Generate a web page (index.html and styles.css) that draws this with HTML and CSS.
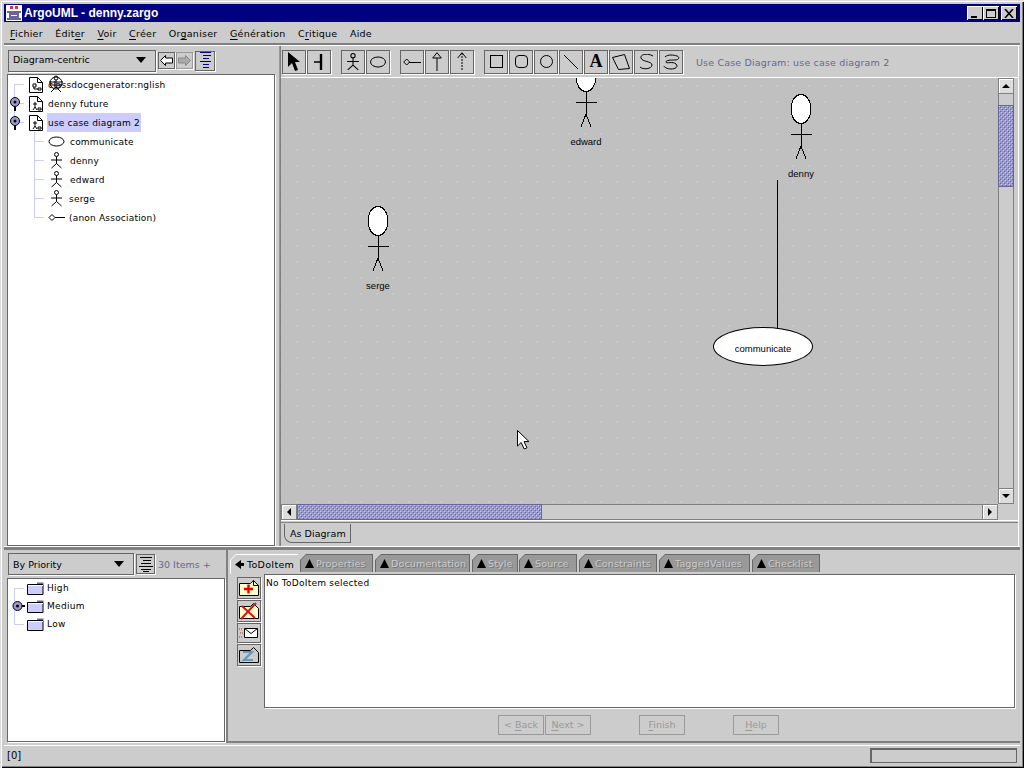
FILE: index.html
```html
<!DOCTYPE html>
<html>
<head>
<meta charset="utf-8">
<title>ArgoUML - denny.zargo</title>
<link rel="stylesheet" href="styles.css">
</head>
<body>
<svg class="defs" width="0" height="0">
  <defs>
    <symbol id="doc" viewBox="0 0 14 16">
      <path d="M.5.5h8l5 5v10H.5z M8.5.5v5h5" fill="#fff" stroke="#000"/>
    </symbol>
    <symbol id="actor" viewBox="0 0 17 17">
      <circle cx="8.5" cy="2.5" r="2" fill="none" stroke="#000"/>
      <path d="M8.5 4.5v7M3 8h11M8.5 11.5L3.5 16M8.5 11.5l5 4.5" fill="none" stroke="#000"/>
    </symbol>
    <symbol id="figure" viewBox="0 0 24 66">
      <ellipse cx="12" cy="15" rx="10" ry="14.500" fill="#fff" stroke="#000"/>
      <path d="M12 29.500v23M1.500 40.500h21M12 52l-5 13M12 52l5 13" fill="none" stroke="#000"/>
    </symbol>
    <symbol id="key" viewBox="0 0 12 16">
      <circle cx="6" cy="6" r="4.500" fill="#99c" stroke="#000"/>
      <circle cx="6" cy="6" r="1.500" fill="#000"/>
      <path d="M6 10.500V15" stroke="#000" stroke-width="2"/>
    </symbol>
    <symbol id="folder" viewBox="0 0 17 13">
      <path d="M10 .5h6.500v2H10z" fill="#669"/>
      <path d="M.5 2.500h15.500v10H.5z" fill="#ccf" stroke="#000"/>
      <path d="M1 3.500h15" stroke="#fff"/>
    </symbol>
    <symbol id="note" viewBox="0 0 20 16">
      <path d="M.5 3.500h11l3-3 5 5v10H.5z" fill="#ffc" stroke="#000"/>
      <path d="M14.500.5v5h5" fill="none" stroke="#000"/>
    </symbol>
    <symbol id="tri-up" viewBox="0 0 9 9"><path d="M4.500 0L9 9H0z"/></symbol>
  </defs>
</svg>

<div class="window">
  <div class="titlebar">
    <svg class="app-icon" width="16" height="16" viewBox="0 0 16 16">
      <rect width="16" height="16" fill="#fff"/>
      <path d="M4 1h3v3H4zM9 1h3v3H9z" fill="#d33"/>
      <path d="M1 6h14v2H1zM3 8h10v5H3zM1 13h14v2H1z" fill="#669"/>
      <path d="M5 10h6v1H5z" fill="#fff"/>
    </svg>
    <span class="title-text">ArgoUML - denny.zargo</span>
    <div class="win-btns">
      <span class="win-btn"><i class="glyph-min"></i></span>
      <span class="win-btn"><i class="glyph-max"></i></span>
      <span class="win-btn close">
        <svg width="10" height="9" viewBox="0 0 10 9"><path d="M1 0l8 9M9 0l-8 9" stroke="#000" stroke-width="1.600"/></svg>
      </span>
    </div>
  </div>

  <div class="menubar">
    <span><u>F</u>ichier</span>
    <span>Édit<u>e</u>r</span>
    <span><u>V</u>oir</span>
    <span><u>C</u>réer</span>
    <span>Or<u>g</u>aniser</span>
    <span><u>G</u>énération</span>
    <span>C<u>r</u>itique</span>
    <span>Aide</span>
  </div>

  <div class="upper">
    <div class="nav-pane">
      <div class="nav-tools">
        <div class="combo wide">Diagram-centric<i class="combo-arrow"></i></div>
        <span class="mini-btn">
          <svg width="13" height="11" viewBox="0 0 13 11"><path d="M5.500.5L.5 5.500l5 5V8h7V3h-7z" fill="#fff" stroke="#000"/></svg>
        </span>
        <span class="mini-btn off">
          <svg width="13" height="11" viewBox="0 0 13 11"><path d="M7.500.5l5 5-5 5V8h-7V3h7z" fill="#aaa" stroke="#888"/></svg>
        </span>
        <span class="mini-btn outline-btn">
          <svg width="13" height="17" viewBox="0 0 13 17"><path d="M1 .5h11M4 3.500h8M4 6.500h6M1 9.500h11M4 12.500h6M4 15.500h6" stroke="#008"/></svg>
        </span>
      </div>
      <div class="tree nav-tree">
        <div class="tree-row top-first">
          <svg class="doc-icon"><use href="#doc"/></svg>
          <svg class="mini" width="10" height="8" viewBox="0 0 10 8"><path d="M1 1h3v3H1zM6 5h3v2H6zM2 4v2h4" fill="none" stroke="#000"/></svg>
          <span class="label">classdocgenerator:nglish</span>
          <svg class="overlay-actor" width="18" height="18" viewBox="0 0 18 18">
            <circle cx="9" cy="3" r="2" fill="none" stroke="#000"/>
            <path d="M9 5v8M2 7h14M3 10h12M9 12l-5 5M9 12l5 5" fill="none" stroke="#000"/>
            <circle cx="9" cy="8" r="6" fill="none" stroke="#000"/>
          </svg>
        </div>
        <div class="tree-row top-mid">
          <svg class="handle"><use href="#key"/></svg>
          <svg class="doc-icon"><use href="#doc"/></svg>
          <svg class="mini" width="10" height="10" viewBox="0 0 10 10"><path d="M3 1v5M1 3h4M3 6L1 9M3 6l2 3M6 7h3v2H6z" fill="none" stroke="#000"/></svg>
          <span class="label">denny future</span>
        </div>
        <div class="tree-row top-last">
          <svg class="handle"><use href="#key"/></svg>
          <svg class="doc-icon"><use href="#doc"/></svg>
          <svg class="mini" width="10" height="10" viewBox="0 0 10 10"><path d="M3 1v5M1 3h4M3 6L1 9M3 6l2 3M6 7h3v2H6z" fill="none" stroke="#000"/></svg>
          <span class="label picked">use case diagram 2</span>
        </div>
        <div class="tree-row child">
          <svg class="leaf" viewBox="0 0 17 17"><ellipse cx="8.500" cy="8.500" rx="7.500" ry="4.500" fill="#fff" stroke="#000"/></svg>
          <span class="label">communicate</span>
        </div>
        <div class="tree-row child">
          <svg class="leaf"><use href="#actor"/></svg>
          <span class="label">denny</span>
        </div>
        <div class="tree-row child">
          <svg class="leaf"><use href="#actor"/></svg>
          <span class="label">edward</span>
        </div>
        <div class="tree-row child tight">
          <svg class="leaf"><use href="#actor"/></svg>
          <span class="label">serge</span>
        </div>
        <div class="tree-row child tight last">
          <svg class="leaf" viewBox="0 0 17 17"><path d="M1 8.500l3-3 3 3-3 3z" fill="#fff" stroke="#000"/><path d="M7 8.500h10" stroke="#000"/></svg>
          <span class="label">(anon Association)</span>
        </div>
      </div>
    </div>

    <div class="editor-pane">
      <div class="draw-tools">
        <div class="tool-group">
          <span class="tool"><svg width="14" height="20" viewBox="0 0 14 20"><path d="M1 0v15l4-4 3 8 3-1-3-8h5z"/></svg></span>
          <span class="tool"><svg width="12" height="16" viewBox="0 0 12 16"><path d="M8 0v16" stroke="#000" stroke-width="2.400"/><path d="M1 8h7" stroke="#000" stroke-width="1.500"/></svg></span>
        </div>
        <div class="tool-group">
          <span class="tool"><svg width="18" height="18" viewBox="0 0 18 18"><use href="#actor" width="18" height="18"/></svg></span>
          <span class="tool"><svg width="18" height="12" viewBox="0 0 18 12"><ellipse cx="9" cy="6" rx="7.500" ry="5" fill="none" stroke="#000"/></svg></span>
        </div>
        <div class="tool-group">
          <span class="tool"><svg width="18" height="8" viewBox="0 0 18 8"><path d="M.7 4l3-3 3 3-3 3z" fill="none" stroke="#000"/><path d="M6 4.500h12" stroke="#000"/></svg></span>
          <span class="tool"><svg width="10" height="19" viewBox="0 0 10 19"><path d="M5 .7L.7 6h8.600zM5 6v13" fill="none" stroke="#000"/></svg></span>
          <span class="tool"><svg width="10" height="19" viewBox="0 0 10 19"><path d="M5 .7L.7 6M5 .7L9.300 6" fill="none" stroke="#000"/><path d="M5 1v18" stroke="#000" stroke-dasharray="2 1"/></svg></span>
        </div>
        <div class="tool-group">
          <span class="tool"><i class="shape-rect"></i></span>
          <span class="tool"><i class="shape-rect round"></i></span>
          <span class="tool"><i class="shape-rect circle"></i></span>
          <span class="tool"><svg width="14" height="14" viewBox="0 0 14 14"><path d="M0 0l14 14" stroke="#000"/></svg></span>
          <span class="tool letter">A</span>
          <span class="tool"><svg width="18" height="16" viewBox="0 0 18 16"><path d="M.5 3.500l12-3 5 14-11 1z" fill="none" stroke="#000"/></svg></span>
          <span class="tool"><svg width="15" height="16" viewBox="0 0 15 16"><path d="M14 2C9-1 1 0 2 4s11 3 11 7-9 5-12 2" fill="none" stroke="#000"/></svg></span>
          <span class="tool"><svg width="17" height="16" viewBox="0 0 17 16"><path d="M2 3C5 0 11 1 14 2s2 4-2 4-9 0-9 2 7-1 10 2-1 5-5 5-7-2-7-3" fill="none" stroke="#000"/></svg></span>
        </div>
        <span class="diagram-name">Use Case Diagram: use case diagram 2</span>
      </div>

      <div class="canvas-wrap">
        <div class="canvas">
          <svg class="edge" width="717" height="426">
            <path d="M496.500 102v149" stroke="#000"/>
          </svg>
          <div class="actor-node node-edward">
            <svg class="figure" width="24" height="66"><use href="#figure"/></svg>
            <span>edward</span>
          </div>
          <div class="actor-node node-denny">
            <svg class="figure" width="24" height="66"><use href="#figure"/></svg>
            <span>denny</span>
          </div>
          <div class="actor-node node-serge">
            <svg class="figure" width="24" height="66"><use href="#figure"/></svg>
            <span>serge</span>
          </div>
          <div class="usecase-node">communicate</div>
          <svg class="cursor" width="13" height="20" viewBox="0 0 13 20">
            <path d="M.5.5v15.500l3.700-3.500 3 6.500 2.800-1.200-3-6.200h5z" fill="#fff" stroke="#000"/>
          </svg>
        </div>
        <div class="vscroll">
          <span class="arrow-btn"><i class="arr-up"></i></span>
          <div class="track"><div class="thumb v-thumb"></div></div>
          <span class="arrow-btn"><i class="arr-down"></i></span>
        </div>
        <div class="hscroll">
          <span class="arrow-btn"><i class="arr-left"></i></span>
          <div class="track"><div class="thumb h-thumb"></div></div>
          <span class="arrow-btn"><i class="arr-right"></i></span>
        </div>
      </div>

      <div class="view-tabs">
        <span class="view-tab">As Diagram</span>
      </div>
    </div>
  </div>

  <div class="lower">
    <div class="todo-pane">
      <div class="todo-tools">
        <div class="combo narrow">By Priority<i class="combo-arrow"></i></div>
        <span class="mini-btn big">
          <svg width="14" height="15" viewBox="0 0 14 15"><path d="M1 .5h12M4 3.500h8M2 6.500h10M0 9.500h14M2 12.500h10M4 14.500h6" stroke="#000"/></svg>
        </span>
        <span class="item-count">30 Items +</span>
      </div>
      <div class="tree todo-tree">
        <div class="folder-row"><svg class="folder"><use href="#folder"/></svg><span>High</span></div>
        <div class="folder-row open">
          <svg class="handle side" width="13" height="12" viewBox="0 0 13 12"><circle cx="5.500" cy="6" r="4.500" fill="#99c" stroke="#000"/><circle cx="5.500" cy="6" r="1.500" fill="#000"/><path d="M10 6h3" stroke="#000" stroke-width="2"/></svg>
          <svg class="folder"><use href="#folder"/></svg><span>Medium</span>
        </div>
        <div class="folder-row last"><svg class="folder"><use href="#folder"/></svg><span>Low</span></div>
      </div>
    </div>

    <div class="detail-pane">
      <div class="tabs">
        <span class="tab active"><svg width="9" height="9" viewBox="0 0 9 9"><path d="M0 4.500L6 0v3h3v3H6v3z"/></svg>ToDoItem</span>
        <span class="tab t-props"><svg class="tri"><use href="#tri-up"/></svg>Properties</span>
        <span class="tab t-doc"><svg class="tri"><use href="#tri-up"/></svg>Documentation</span>
        <span class="tab t-style"><svg class="tri"><use href="#tri-up"/></svg>Style</span>
        <span class="tab t-source"><svg class="tri"><use href="#tri-up"/></svg>Source</span>
        <span class="tab t-cons"><svg class="tri"><use href="#tri-up"/></svg>Constraints</span>
        <span class="tab t-tagged"><svg class="tri"><use href="#tri-up"/></svg>TaggedValues</span>
        <span class="tab t-check"><svg class="tri"><use href="#tri-up"/></svg>Checklist</span>
      </div>
      <div class="detail-main">
        <div class="action-col">
          <span class="action">
            <svg width="20" height="16"><use href="#note"/><path d="M5 9h9M9.500 4.500v9" stroke="#e00" stroke-width="2.400"/></svg>
          </span>
          <span class="action">
            <svg width="20" height="18" viewBox="0 0 20 18"><path d="M.5 4.500h11l3-3 5 5v10H.5z" fill="#ffc" stroke="#000"/><path d="M2 17L17 1M3 4l13 12" stroke="#d11" stroke-width="2"/></svg>
          </span>
          <span class="action short">
            <svg width="20" height="12" viewBox="0 0 20 12"><path d="M0 2h3M1 6h3M0 10h3" stroke="#d22" stroke-dasharray="1 1"/><path d="M5.500 1.500h13v9h-13z" fill="#fff" stroke="#000"/><path d="M5.500 1.500l6.500 5 6.500-5" fill="none" stroke="#000"/></svg>
          </span>
          <span class="action">
            <svg width="20" height="16" viewBox="0 0 20 16"><path d="M.5 3.500h11l3-3 5 5v10H.5z" fill="#ccc" stroke="#000"/><path d="M4 5h9l-8 8h9" fill="none" stroke="#69b" stroke-width="2.200"/></svg>
          </span>
        </div>
        <div class="todo-text">No ToDoItem selected</div>
      </div>
      <div class="wizard-bar">
        <span class="wiz-btn w-back"><span>&lt; <u>B</u>ack</span></span>
        <span class="wiz-btn w-next"><span><u>N</u>ext &gt;</span></span>
        <span class="wiz-btn w-finish"><span><u>F</u>inish</span></span>
        <span class="wiz-btn w-help"><span><u>H</u>elp</span></span>
      </div>
    </div>
  </div>

  <div class="statusbar">
    <span class="status-text">[0]</span>
    <span class="status-box"></span>
  </div>
</div>
</body>
</html>
```

FILE: styles.css
```css
* { box-sizing: border-box; }

body {
  margin: 0;
  width: 1024px;
  height: 768px;
  overflow: hidden;
  font-family: "DejaVu Sans", Verdana, sans-serif;
  font-size: 9px;
  color: #000;
  background: #ccc;
}

.defs { position: absolute; }

.window {
  width: 1024px;
  height: 768px;
  padding: 4px;
  background: #ccc;
  display: flex;
  flex-direction: column;
  box-shadow: inset 1px 1px 0 #ddd, inset 2px 2px 0 #fff, inset -1px -1px 0 #000, inset -2px -2px 0 #808080;
}

/* title + menu */
.titlebar {
  height: 18px;
  flex: none;
  background: #000080;
  color: #fff;
  display: flex;
  align-items: center;
  padding: 0 3px 0 2px;
}
.app-icon { margin-right: 2px; }
.title-text { font-family: "Liberation Sans", Arial, sans-serif; font-size: 12px; font-weight: bold; }
.win-btns { margin-left: auto; display: flex; }
.win-btn {
  width: 16px;
  height: 14px;
  background: #ccc;
  box-shadow: inset 1px 1px 0 #fff, inset -1px -1px 0 #000;
  display: flex;
  align-items: center;
  justify-content: center;
  position: relative;
}
.win-btn.close { margin-left: 2px; }
.glyph-min { width: 6px; height: 2px; background: #000; margin-top: 7px; margin-right: 2px; }
.glyph-max { width: 10px; height: 9px; border: 1px solid #000; border-top-width: 2px; }

.menubar {
  height: 23px;
  flex: none;
  display: flex;
  align-items: center;
  gap: 12.500px;
  padding: 1px 6px 0;
  border-bottom: 2px solid #808080;
  font-size: 9.500px;
  letter-spacing: .25px;
}
.menubar u, .wiz-btn u { text-underline-offset: 2px; }

/* top half */
.upper {
  height: 502px;
  flex: none;
  display: flex;
  border-top: 1px solid #fff;
  border-bottom: 1px solid #fff;
}
.nav-pane {
  width: 272px;
  flex: none;
  display: flex;
  flex-direction: column;
  padding: 0 1px 0 3px;
}
.nav-tools {
  height: 28px;
  flex: none;
  display: flex;
  align-items: center;
  padding: 1px 0 0 1px;
}
.combo {
  height: 22px;
  border: 1px solid #666;
  box-shadow: 1px 1px 0 #fff;
  display: flex;
  align-items: center;
  justify-content: space-between;
  padding: 0 9px 0 4px;
  font-size: 9.500px;
}
.combo.wide { width: 148px; margin-right: 2px; padding-bottom: 2px; }
.combo.narrow { width: 126px; margin-right: 2px; }
.combo-arrow { width: 0; height: 0; border: 5px solid transparent; border-top: 6px solid #000; border-bottom: 0; }

.mini-btn {
  width: 17px;
  height: 17px;
  border: 1px solid #666;
  box-shadow: 1px 1px 0 #fff;
  margin-right: 1px;
  display: flex;
  align-items: center;
  justify-content: center;
}
.mini-btn.off { border-color: #999; }
.mini-btn.outline-btn { width: 20px; height: 20px; margin-left: 1px; }
.mini-btn.big { width: 19px; height: 20px; }

.tree {
  background: #fff;
  border: 1px solid #666;
  box-shadow: 1px 1px 0 #fff;
  letter-spacing: .2px;
}
.nav-tree { flex: 1; }

.tree-row {
  height: 19px;
  display: flex;
  align-items: center;
  position: relative;
  padding-left: 21px;
}
.tree-row .label { padding: 1px 1px 0; height: 19px; line-height: 19px; margin-left: 4px; white-space: nowrap; }
.label.picked { background: #ccf; padding-right: 1px; }

.top-first::before, .top-mid::before, .top-last::before {
  content: "";
  position: absolute;
  left: 6px;
  top: 9px;
  width: 10px;
  border-top: 1px solid #ccf;
}
.top-first::after, .top-mid::after {
  content: "";
  position: absolute;
  left: 6px;
  top: 9px;
  height: 19px;
  border-left: 1px solid #ccf;
}
.child::before {
  content: "";
  position: absolute;
  left: 26px;
  top: 9px;
  width: 10px;
  border-top: 1px solid #ccf;
}
.child::after {
  content: "";
  position: absolute;
  left: 26px;
  top: 0;
  height: 19px;
  border-left: 1px solid #ccf;
}
.child.last::after { height: 10px; }

.doc-icon { width: 14px; height: 16px; flex: none; }
.mini { margin-left: -11px; margin-top: 5px; margin-right: 1px; flex: none; background: transparent; }
.handle { position: absolute; left: 1px; top: 2px; width: 12px; height: 16px; z-index: 1; }
.overlay-actor { position: absolute; left: 39px; top: 0; }
.child { padding-left: 40px; }
.leaf { width: 17px; height: 17px; flex: none; }
.tight .label { margin-left: 3px; }

/* editor */
.editor-pane {
  flex: 1;
  min-width: 0;
  margin: 0 1px 0 4px;
  display: flex;
  flex-direction: column;
  border-left: 1px solid #808080;
  border-right: 1px solid #fff;
  box-shadow: -1px 0 0 #999;
}
.draw-tools {
  height: 32px;
  flex: none;
  display: flex;
  align-items: center;
  padding-left: 1px;
  border-bottom: 1px solid #fff;
}
.tool-group { display: flex; gap: 1px; margin-right: 10px; }
.tool {
  width: 24px;
  height: 24px;
  border: 1px solid #666;
  box-shadow: 1px 1px 0 #fff;
  display: flex;
  align-items: center;
  justify-content: center;
}
.tool.letter { font-family: "Liberation Serif", serif; font-weight: bold; font-size: 18px; }
.shape-rect { display: block; width: 13px; height: 13px; border: 1px solid #000; }
.shape-rect.round { border-radius: 4px; }
.shape-rect.circle { border-radius: 50%; }
.diagram-name { color: #669; font-size: 9.500px; letter-spacing: .17px; margin: 1px 0 0 3px; }

.canvas-wrap {
  flex: none;
  width: 733px;
  height: 442px;
  display: grid;
  grid-template-columns: 717px 16px;
  grid-template-rows: 426px 16px;
}
.canvas {
  position: relative;
  overflow: hidden;
  background: #c0c0c0 radial-gradient(circle at 1px 1px, #c9c9c9 1px, transparent 1.500px) 15px 7px / 16px 16px;
}
.edge { position: absolute; left: 0; top: 0; shape-rendering: crispEdges; }
.figure { shape-rendering: crispEdges; flex: none; }
.actor-node {
  position: absolute;
  width: 60px;
  display: flex;
  flex-direction: column;
  align-items: center;
  font-family: "Liberation Sans", Arial, sans-serif;
  font-size: 9.500px;
}
.actor-node span { margin-top: 8px; line-height: 11px; }
.node-edward { left: 275px; top: -16px; }
.node-denny { left: 490px; top: 16px; }
.node-serge { left: 67px; top: 128px; }
.usecase-node {
  position: absolute;
  left: 432px;
  top: 249px;
  width: 100px;
  height: 39px;
  border: 1px solid #000;
  border-radius: 50%;
  background: #fff;
  display: flex;
  align-items: center;
  justify-content: center;
  padding-top: 4px;
  font-family: "Liberation Sans", Arial, sans-serif;
  font-size: 9.500px;
}
.cursor { position: absolute; left: 236px; top: 352px; }

.vscroll, .hscroll { display: flex; background: #ccc; }
.vscroll { flex-direction: column; grid-row: 1; grid-column: 2; }
.hscroll { grid-row: 2; grid-column: 1; }
.arrow-btn {
  flex: none;
  width: 16px;
  height: 16px;
  background: #ddd;
  border: 1px solid #808080;
  box-shadow: inset 1px 1px 0 #fff;
  display: flex;
  align-items: center;
  justify-content: center;
}
.arr-up, .arr-down, .arr-left, .arr-right { width: 0; height: 0; border: 4px solid transparent; }
.arr-up { border-bottom: 4px solid #000; border-top: 0; }
.arr-down { border-top: 4px solid #000; border-bottom: 0; }
.arr-left { border-right: 4px solid #000; border-left: 0; }
.arr-right { border-left: 4px solid #000; border-right: 0; }
.track { flex: 1; min-width: 0; min-height: 0; border: 1px solid #808080; border-width: 1px 0; }
.vscroll .track { border-width: 0 1px; }
.thumb {
  --lite: conic-gradient(from 270deg at 1px 1px, #ccf 25%, transparent 0);
  --dark: conic-gradient(from 270deg at 1px 1px, #669 25%, transparent 0);
  background-color: #99c;
  background-image: var(--lite), var(--lite), var(--dark), var(--dark);
  background-position: 0 0, 2px 2px, 1px 1px, 3px 3px;
  background-size: 4px 4px;
  border: 1px solid #669;
}
.v-thumb { height: 82px; margin: 11px -1px 0; }
.h-thumb { width: 245px; height: 16px; margin: -1px 0; }

.view-tabs {
  flex: 1;
  padding: 3px 0 0 3px;
  border-top: 1px solid #fff;
  box-shadow: inset 0 1px 0 #ccc, inset 0 2px 0 #808080;
}
.view-tab {
  display: flex;
  align-items: center;
  width: 67px;
  height: 19px;
  padding-left: 5px;
  border: 1px solid #666;
  border-top: 0;
  font-size: 9.500px;
  letter-spacing: .05px;
  border-bottom-left-radius: 8px;
}

/* bottom half */
.lower {
  height: 196px;
  flex: none;
  display: flex;
  border-top: 3px solid #808080;
}
.todo-pane {
  width: 222px;
  flex: none;
  display: flex;
  flex-direction: column;
  padding: 0 1px 1px 3px;
}
.todo-tools {
  height: 28px;
  flex: none;
  display: flex;
  align-items: center;
  padding-left: 1px;
}
.item-count { color: #669; font-size: 9.500px; margin-left: 2px; }
.todo-tree { flex: 1; letter-spacing: .3px; }
.folder-row {
  height: 18px;
  display: flex;
  align-items: center;
  gap: 3px;
  padding-left: 19px;
  position: relative;
}
.folder-row::before {
  content: "";
  position: absolute;
  left: 6px;
  top: 9px;
  width: 10px;
  border-top: 1px solid #ccf;
}
.folder-row::after {
  content: "";
  position: absolute;
  left: 6px;
  top: 9px;
  height: 18px;
  border-left: 1px solid #ccf;
}
.folder-row.last::after { display: none; }
.folder { width: 17px; height: 13px; flex: none; }
.handle.side { left: 4px; top: 3px; width: 13px; height: 12px; }

.detail-pane {
  flex: 1;
  min-width: 0;
  display: flex;
  flex-direction: column;
  border-left: 2px solid #808080;
  padding-top: 1px;
}
.tabs {
  height: 23px;
  flex: none;
  display: flex;
  align-items: flex-start;
  padding: 3px 0 0 2px;
  gap: 2px;
}
.tab {
  position: relative;
  isolation: isolate;
  height: 18px;
  display: flex;
  align-items: center;
  gap: 2px;
  padding-left: 5px;
  white-space: nowrap;
  font-size: 9.500px;
  letter-spacing: .15px;
  color: #ccc;
  text-shadow: 1px 1px 0 #777;
  background: #666;
  clip-path: polygon(6px 0, 100% 0, 100% 100%, 0 100%, 0 6px);
}
.tab::before {
  content: "";
  position: absolute;
  inset: 1px 1px 0 1px;
  background: #999;
  clip-path: polygon(5px 0, 100% 0, 100% 100%, 0 100%, 0 5px);
  z-index: -1;
}
.tab.active { width: 68px; height: 20px; color: #000; text-shadow: none; background: #fff; gap: 3px; padding-left: 5px; letter-spacing: .3px; }
.tab.active::before { background: #ccc; inset: 1px 0 0 1px; }
.tri { width: 9px; height: 9px; flex: none; }
.t-props { width: 73px; }
.t-doc { width: 95px; }
.t-style { width: 46px; margin-right: -1px; }
.t-source { width: 58px; }
.t-cons { width: 78px; }
.t-tagged { width: 91px; }
.t-check { width: 68px; }

.detail-main {
  height: 134px;
  flex: none;
  display: flex;
  padding: 0 5px 0 9px;
}
.action-col {
  width: 27px;
  flex: none;
  padding-top: 3px;
  display: flex;
  flex-direction: column;
  gap: 1px;
}
.action {
  width: 24px;
  height: 22px;
  flex: none;
  border: 1px solid #666;
  box-shadow: 1px 1px 0 #fff;
  display: flex;
  align-items: center;
  justify-content: center;
}
.action.short { height: 20px; }
.todo-text {
  flex: 1;
  background: #fff;
  border: 1px solid #666;
  box-shadow: 1px 1px 0 #fff;
  padding: 2px 1px;
  line-height: 12px;
  letter-spacing: .25px;
}
.wizard-bar {
  flex: 1;
  display: flex;
  align-items: flex-start;
  padding: 7px 0 0 270px;
  border-bottom: 2px solid #808080;
}
.wiz-btn {
  width: 46px;
  height: 20px;
  border: 1px solid #999;
  color: #999;
  display: flex;
  align-items: center;
  justify-content: center;
  padding-bottom: 1px;
  font-size: 9.500px;
  white-space: nowrap;
}
.w-next { margin-left: 1px; }
.w-finish { margin-left: 48px; }
.w-help { margin-left: 48px; }

.statusbar {
  flex: 1;
  display: flex;
  align-items: center;
  justify-content: space-between;
  border-top: 1px solid #fff;
  margin-top: 2px;
  padding: 1px 0 1px 3px;
  font-size: 10px;
}
.status-box {
  width: 147px;
  height: 15px;
  border: 1px solid #666;
  border-width: 2px 1px 1px 2px;
  margin-right: 3px;
}
```
